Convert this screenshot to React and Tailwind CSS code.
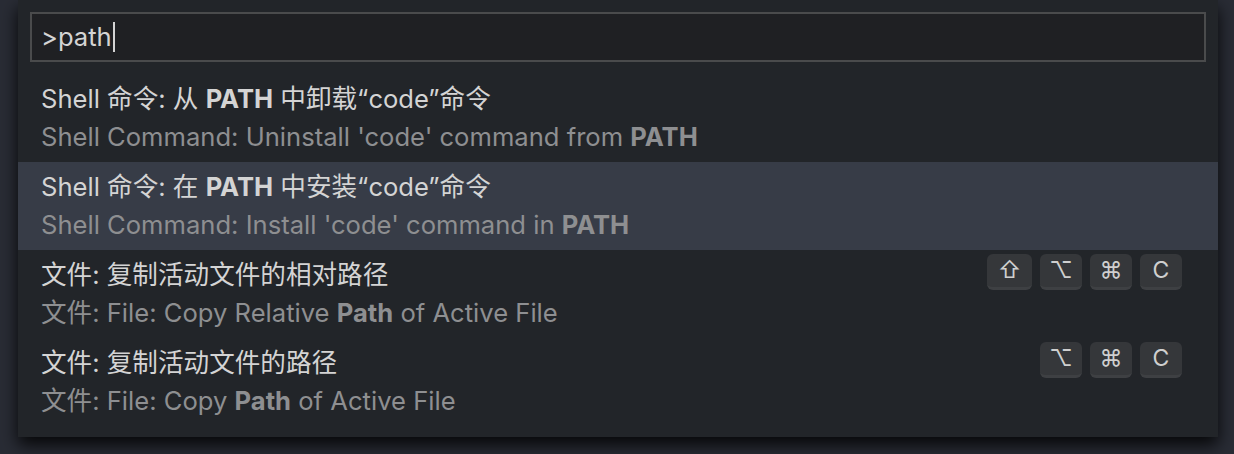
import React from "react";

const font = { fontFamily: 'Inter, "Noto Sans CJK SC", sans-serif' };

function Key({ children, wide }) {
  return (
    <div className={`h-[36px] ${wide ? "w-[45px]" : "w-[42px]"} flex items-center justify-center rounded-[6px] bg-[#35373a] border-b-[3px] border-[#3e4043] text-[#cfcfcf] text-[23px] leading-none`}>
      {children}
    </div>
  );
}

function Row({ top, bottom, keys, selected }) {
  return (
    <div className={`h-[88px] flex items-center pl-[23px] pr-[36px] ${selected ? "bg-[#373c47]" : ""}`}>
      <div className="flex-1 flex flex-col">
        <div className="text-[25.6px] leading-[38px] text-[#d4d4d4] whitespace-nowrap">{top}</div>
        <div className="text-[25.6px] leading-[38px] text-[#8e8f91] whitespace-nowrap">{bottom}</div>
      </div>
      {keys && (
        <div className="flex gap-[8px] self-start mt-[4px]">
          {keys.map((k, i) => (
            <Key key={i} wide={k === "⇧"}>{k}</Key>
          ))}
        </div>
      )}
    </div>
  );
}

export default function App() {
  return (
    <div className="w-[1234px] h-[454px] bg-[#292c35] overflow-hidden" style={font}>
      <div className="ml-[18px] w-[1200px] h-[437px] bg-[#222529] shadow-[0_8px_16px_rgba(0,0,0,0.85)] flex flex-col">
        <div className="mx-[12px] mt-[12px] h-[50px] border-2 border-[#4a4b4c] bg-[#1f2023] flex items-center pl-[9px]">
          <span className="text-[25.6px] text-[#d4d4d4]">&gt;path</span>
          <span className="w-[2px] h-[30px] bg-[#d4d4d4] ml-[1px]"></span>
        </div>
        <div className="mt-[12px] flex flex-col">
          <Row
            top={<>Shell 命令: 从 <b>PATH</b> 中卸载“code”命令</>}
            bottom={<>Shell Command: Uninstall 'code' command from <b>PATH</b></>}
          />
          <Row
            selected
            top={<>Shell 命令: 在 <b>PATH</b> 中安装“code”命令</>}
            bottom={<>Shell Command: Install 'code' command in <b>PATH</b></>}
          />
          <Row
            top={<>文件: 复制活动文件的相对路径</>}
            bottom={<>文件: File: Copy Relative <b>Path</b> of Active File</>}
            keys={["⇧", "⌥", "⌘", "C"]}
          />
          <Row
            top={<>文件: 复制活动文件的路径</>}
            bottom={<>文件: File: Copy <b>Path</b> of Active File</>}
            keys={["⌥", "⌘", "C"]}
          />
        </div>
      </div>
    </div>
  );
}
